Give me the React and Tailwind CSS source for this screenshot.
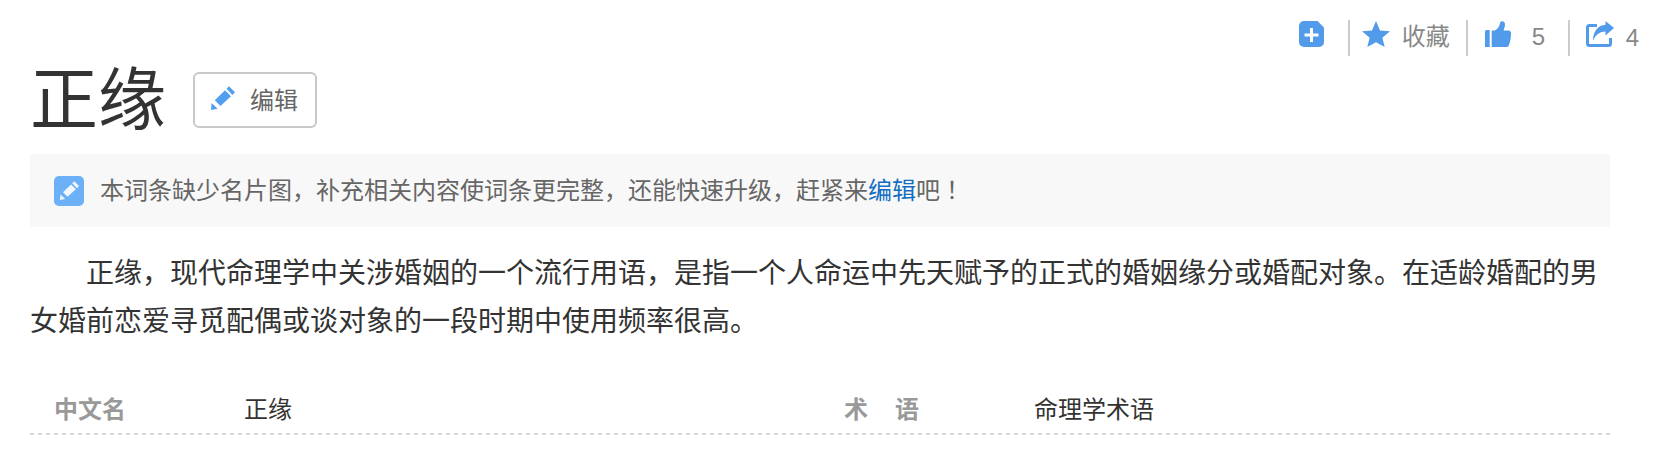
const PencilIcon = ({ className }) => (
  <svg viewBox="0 0 24 24" fill="currentColor" className={className}>
    <path d="M15.500 2.700L18 .2 24 6.300l-2.600 2.800z" />
    <path d="M14 4.300l6 6L9.500 20 3.800 14.300z" />
    <path d="M.6 17l6 5.700L0 24z" />
  </svg>
);

const Divider = () => <span className="h-9 w-0.5 bg-[#ccc]" />;

const Toolbar = () => (
  <div className="flex h-9 items-center text-2xl leading-9 text-[#888]">
    <svg viewBox="0 0 25 26" className="mr-[24px] h-[26px] w-[25px] -translate-y-1 text-[#529bea]">
      <path
        fill="currentColor"
        d="M5 0H18.500L25 6.500V21a5 5 0 0 1-5 5H5a5 5 0 0 1-5-5V5a5 5 0 0 1 5-5z"
      />
      <path d="M12.500 7v14M5.500 14h14" stroke="#fff" strokeWidth="3" />
    </svg>
    <Divider />
    <svg viewBox="0 0 28 26" fill="currentColor" className="mr-[12px] ml-3 h-[26px] w-7 -translate-y-1 text-[#529bea]">
      <path d="M14 0l4 9.400 10 .8-7.600 6.500L22.700 26 14 21.200 5.300 26l2.300-9.300L0 10.200l10-.8z" />
    </svg>
    <span className="w-16 -translate-y-px">收藏</span>
    <Divider />
    <svg viewBox="0 0 26 26" fill="currentColor" className="mr-[21px] ml-[17px] h-[26px] w-[26px] -translate-y-1 text-[#529bea]">
      <path d="M0 10.500a1.500 1.500 0 0 1 1.500-1.500H4.700v17H0z" />
      <path d="M6.700 9.500H10c3-2 4.500-4.500 5-7.500.5-2.500 5-2.500 5 1.500 0 2-.8 4-1.500 6H23.500A2.500 2.500 0 0 1 26 12.500c0 4-.7 8-2 11.500-.5 1.500-1.500 2-3 2H6.700z" />
    </svg>
    <span className="w-[36px] -translate-y-px">5</span>
    <Divider />
    <svg viewBox="0 0 28 26" className="mr-3 ml-4 h-[26px] w-7 -translate-y-1 text-[#529bea]">
      <path
        d="M11 4.500H3.500a2 2 0 0 0-2 2V22.500a2 2 0 0 0 2 2H22.500a2 2 0 0 0 2-2V17"
        fill="none"
        stroke="currentColor"
        strokeWidth="3"
      />
      <path d="M19.500 0L28 7l-8.500 7.500V10.500C14 10.500 10 13.500 7 19.500 7 11 12 4 19.500 3.800z" fill="currentColor" />
    </svg>
    <span>4</span>
  </div>
);

const Notice = () => (
  <div className="mt-[26px] flex h-[73px] items-center bg-[#f8f8f8] pl-6 text-2xl text-[#666]">
    <span className="mr-4 flex size-[30px] items-center justify-center rounded-[5px] bg-[#6cb1f7] text-white/90">
      <PencilIcon className="size-[19px]" />
    </span>
    <p>
      本词条缺少名片图，补充相关内容使词条更完整，还能快速升级，赶紧来
      <a href="#" className="text-[#136ec2]">编辑</a>
      吧<span className="ml-1.5">！</span>
    </p>
  </div>
);

const INFO = [
  { label: "中文名", value: "正缘" },
  { label: "术语", value: "命理学术语", spaced: true },
];

const App = () => {
  return (
    <div className="h-[474px] w-[1654px] overflow-hidden bg-white pt-5 pl-[30px] font-['Liberation_Sans','Noto_Sans_CJK_SC',sans-serif] text-[#333]">
      <div className="flex justify-end pr-[15px]">
        <Toolbar />
      </div>
      <div className="w-[1580px]">
        <div className="mt-4 flex h-14 items-center">
          <h1 className="w-[163px] text-[68px] leading-[56px]">正缘</h1>
          <button className="flex h-14 w-[124px] items-center rounded-md border-2 border-[#c8c8c8] pt-0.5 pl-4 text-2xl text-[#666]">
            <PencilIcon className="mr-[15px] size-6 -translate-y-[3px] text-[#529ff0]" />
            编辑
          </button>
        </div>
        <Notice />
        <p className="mt-[23px] indent-14 text-[28px] leading-12">
          正缘，现代命理学中关涉婚姻的一个流行用语，是指一个人命运中先天赋予的正式的婚姻缘分或婚配对象。在适龄婚配的男女婚前恋爱寻觅配偶或谈对象的一段时期中使用频率很高。
        </p>
        <dl className="mt-10 grid h-[47px] grid-cols-2 text-2xl leading-[48px]">
          {INFO.map((item) => (
            <div key={item.label} className="flex pl-6">
              <dt className="w-[190px] font-bold text-[#999]">
                <span className={item.spaced ? "tracking-[27px]" : ""}>{item.label}</span>
              </dt>
              <dd>{item.value}</dd>
            </div>
          ))}
        </dl>
        <div className="h-0.5 bg-[repeating-linear-gradient(90deg,#d8d8d8_0_4px,transparent_4px_8px)]" />
      </div>
    </div>
  );
};

export default App;
